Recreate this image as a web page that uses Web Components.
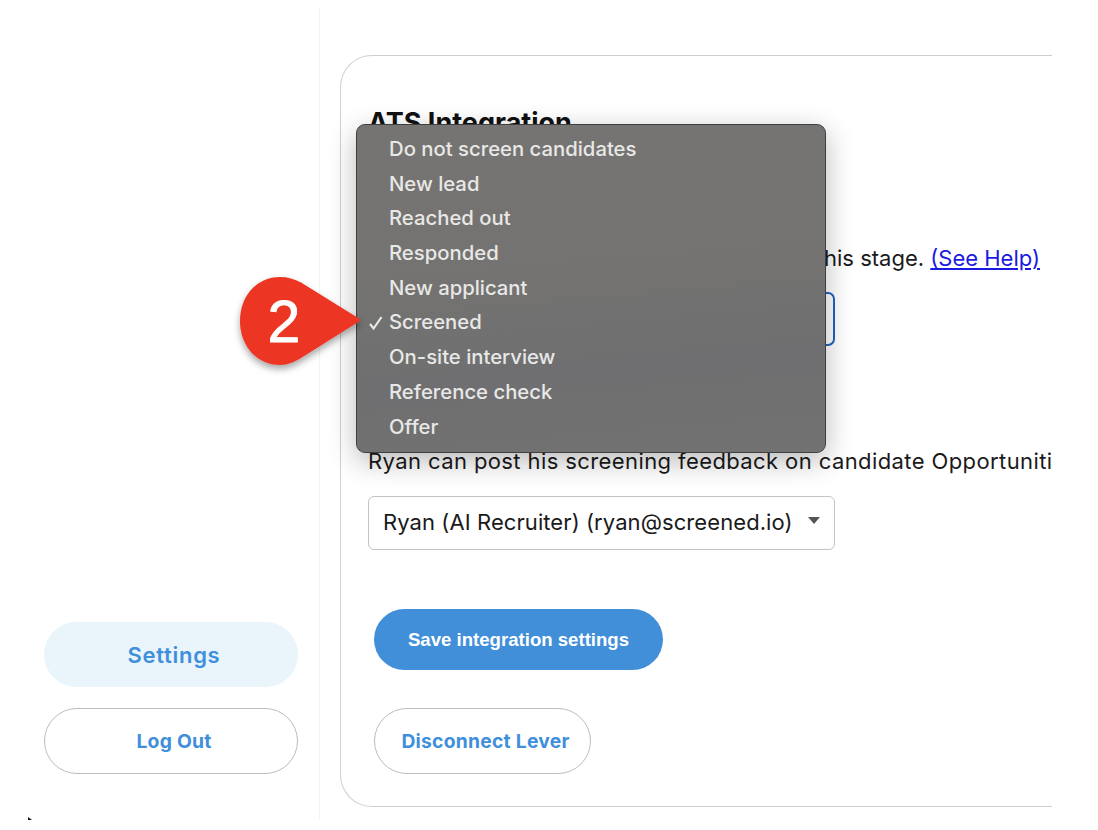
<!DOCTYPE html>
<html>
<head>
<meta charset="utf-8">
<title>ATS Integration</title>
<style>
    html, body { margin: 0; background: #fff; }
    body { font-family: "Inter", "Liberation Sans", sans-serif; color: #1a1a1a; }
</style>
</head>
<body>
<template id="pill-tpl">
    <style>
        :host { display: block; }
        button {
            display: flex;
            align-items: center;
            justify-content: center;
            width: 100%;
            height: 100%;
            box-sizing: border-box;
            border: 1.5px solid #bdbdbd;
            border-radius: 34px;
            background: #fff;
            color: #3f8fdb;
            font: 700 19.3px "Inter", sans-serif;
            letter-spacing: 0.25px;
            padding: 0 0 0 6px;
        }
        :host([variant=soft]) button {
            border: 0;
            background: #e9f4fb;
            font-size: 22px;
            font-weight: 600;
            letter-spacing: 0.7px;
        }
        :host([variant=solid]) button {
            border: 0;
            background: #418fd9;
            color: #fff;
            padding: 0;
            letter-spacing: 0;
            font: 700 18.6px "Liberation Sans", sans-serif;
        }
    </style>
    <button><slot></slot></button>
</template>

<template id="side-tpl">
    <style>
        :host {
            display: flex;
            flex-direction: column;
            justify-content: flex-end;
            gap: 21px;
            box-sizing: border-box;
            flex: none;
            width: 320px;
            height: 812px;
            margin-top: 8px;
            padding: 0 21px 46px 44px;
            border-right: 1.5px solid #f3f3f3;
        }
        ::slotted(.settings) { height: 65px; }
        ::slotted(.logout) { height: 66px; }
    </style>
    <slot></slot>
</template>

<template id="select-tpl">
    <style>
        :host {
            display: flex;
            align-items: center;
            justify-content: space-between;
            box-sizing: border-box;
            width: 467px;
            height: 54px;
            padding: 0 14px 2px 14px;
            border: 1.5px solid #c4c4c4;
            border-radius: 6px;
            font-size: 22px;
            letter-spacing: 0.08px;
            white-space: nowrap;
        }
        :host([focused]) {
            border: 2px solid #2361c4;
            border-radius: 7px;
        }
        i {
            width: 0;
            height: 0;
            margin-top: -3px;
            border: 6.5px solid transparent;
            border-top: 7px solid #555;
            border-bottom: 0;
        }
    </style>
    <slot></slot>
    <i></i>
</template>

<template id="card-tpl">
    <style>
        :host {
            display: block;
            box-sizing: border-box;
            flex: none;
            width: 712px;
            height: 752px;
            margin: 55px 0 0 20px;
            padding: 0 0 0 27px;
            border: 1.5px solid #cfcfcf;
            border-right: 0;
            border-radius: 32px 0 0 32px;
            overflow: hidden;
        }
        ::slotted(h2) {
            margin: 49px 0 0;
            font-size: 27px;
            line-height: 36px;
            font-weight: 700;
            color: #111;
        }
        ::slotted(p) {
            margin: 0;
            font-size: 22px;
            line-height: 28px;
            white-space: nowrap;
        }
        ::slotted(.stage) { margin-top: 103px; padding-left: 456px; }
        ::slotted(.post) { margin-top: 101px; letter-spacing: 0.4px; }
        ::slotted(.sel-a) { margin-top: 20px; }
        ::slotted(.sel-b) { margin-top: 21px; }
        ::slotted(.save) { width: 289px; height: 61px; margin: 59px 0 0 6px; }
        ::slotted(.disconnect) { width: 217px; height: 66px; margin: 38px 0 0 6px; }
    </style>
    <slot></slot>
</template>

<template id="menu-tpl">
    <style>
        :host {
            position: absolute;
            left: 356px;
            top: 124px;
            box-sizing: border-box;
            width: 470px;
            height: 329px;
            padding: 7px 0 0 32px;
            border: 1.5px solid #3f3f3f;
            border-radius: 9px;
            background: linear-gradient(175deg, #767472 0%, #747371 45%, #6f6f71 72%, #727272 100%);
            box-shadow: 0 8px 28px rgba(0, 0, 0, .28);
        }
    </style>
    <slot></slot>
</template>

<template id="item-tpl">
    <style>
        :host {
            display: block;
            position: relative;
            height: 34.7px;
            font: 500 20.3px/34.7px "Inter", "Liberation Sans", sans-serif;
            color: #e8e8e6;
            white-space: nowrap;
        }
        svg {
            position: absolute;
            left: -21px;
            top: 10px;
            display: none;
        }
        :host([checked]) svg { display: block; }
    </style>
    <svg width="16" height="16" viewBox="0 0 16 16" fill="none" stroke="#e8e8e6" stroke-width="2.2">
        <path d="M2 9l3.6 4.500L13.500 2"/>
    </svg>
    <slot></slot>
</template>

<template id="badge-tpl">
    <style>
        :host {
            position: absolute;
            left: 234px;
            top: 270px;
            width: 132px;
            height: 104px;
        }
        svg { position: absolute; left: 0; top: 0; overflow: visible; }
        span {
            position: absolute;
            left: 6px;
            top: 20px;
            width: 88px;
            text-align: center;
            font: 400 59px/64px "Liberation Sans", sans-serif;
            color: #fff;
            -webkit-text-stroke: 0.8px #fff;
        }
    </style>
    <svg width="132" height="104" viewBox="0 0 132 104">
        <defs>
            <filter id="s" x="-20%" y="-20%" width="140%" height="150%">
                <feDropShadow dx="0" dy="4" stdDeviation="3.500" flood-color="#000" flood-opacity=".35"/>
            </filter>
        </defs>
        <path filter="url(#s)" fill="#ec3423" d="M46 7C54 7 60 9 67 12.500L125 48.500Q127 50 125 51.500L67 88C60 92 54 95 46 95C22 95 6 75 6 51C6 27 22 7 46 7Z"/>
    </svg>
    <span><slot></slot></span>
</template>

<app-side>
    <pill-button class="settings" variant="soft">Settings</pill-button>
    <pill-button class="logout">Log Out</pill-button>
</app-side>

<script>
    // small helper, all elements are just a template + open shadow root
    function register(tag, tplId) {
        customElements.define(tag, class extends HTMLElement {
            constructor() {
                super();
                this.attachShadow({mode: 'open'});
                this.shadowRoot.appendChild(document.getElementById(tplId).content.cloneNode(true));
            }
        });
    }

    register('pill-button', 'pill-tpl');
    register('app-side', 'side-tpl');
    register('select-box', 'select-tpl');
    register('settings-card', 'card-tpl');
    register('pop-menu', 'menu-tpl');
    register('pop-item', 'item-tpl');
    register('step-badge', 'badge-tpl');

    class AppShell extends HTMLElement {
        constructor() {
            super();
            this.attachShadow({mode: 'open'});
            this.shadowRoot.innerHTML = `
                <style>
                    :host {
                        display: flex;
                        position: relative;
                        width: 1098px;
                        height: 830px;
                        overflow: hidden;
                    }
                    .cursor { position: absolute; left: 28px; top: 817px; }
                </style>
                <slot></slot>
                <svg class="cursor" width="6" height="4" viewBox="0 0 6 4"><path d="M0 0L4 3H0Z" fill="#111"/></svg>
            `;
        }
    }
    customElements.define('app-shell', AppShell);

    // wrap the sidebar + card in the shell
    const shell = document.createElement('app-shell');
    const side = document.querySelector('app-side');
    document.body.insertBefore(shell, side);
    shell.appendChild(side);
    shell.insertAdjacentHTML('beforeend', `
        <settings-card>
            <h2>ATS Integration</h2>
            <p class="stage">his stage. <a href="#" style="color:#1a1ae0">(See Help)</a></p>
            <select-box class="sel-a" focused></select-box>
            <p class="post">Ryan can post his screening feedback on candidate Opportuniti</p>
            <select-box class="sel-b">Ryan (AI Recruiter) (ryan@screened.io)</select-box>
            <pill-button class="save" variant="solid">Save integration settings</pill-button>
            <pill-button class="disconnect">Disconnect Lever</pill-button>
        </settings-card>
        <pop-menu>
            <pop-item>Do not screen candidates</pop-item>
            <pop-item>New lead</pop-item>
            <pop-item>Reached out</pop-item>
            <pop-item>Responded</pop-item>
            <pop-item>New applicant</pop-item>
            <pop-item checked>Screened</pop-item>
            <pop-item>On-site interview</pop-item>
            <pop-item>Reference check</pop-item>
            <pop-item>Offer</pop-item>
        </pop-menu>
        <step-badge>2</step-badge>
    `);
</script>
</body>
</html>
